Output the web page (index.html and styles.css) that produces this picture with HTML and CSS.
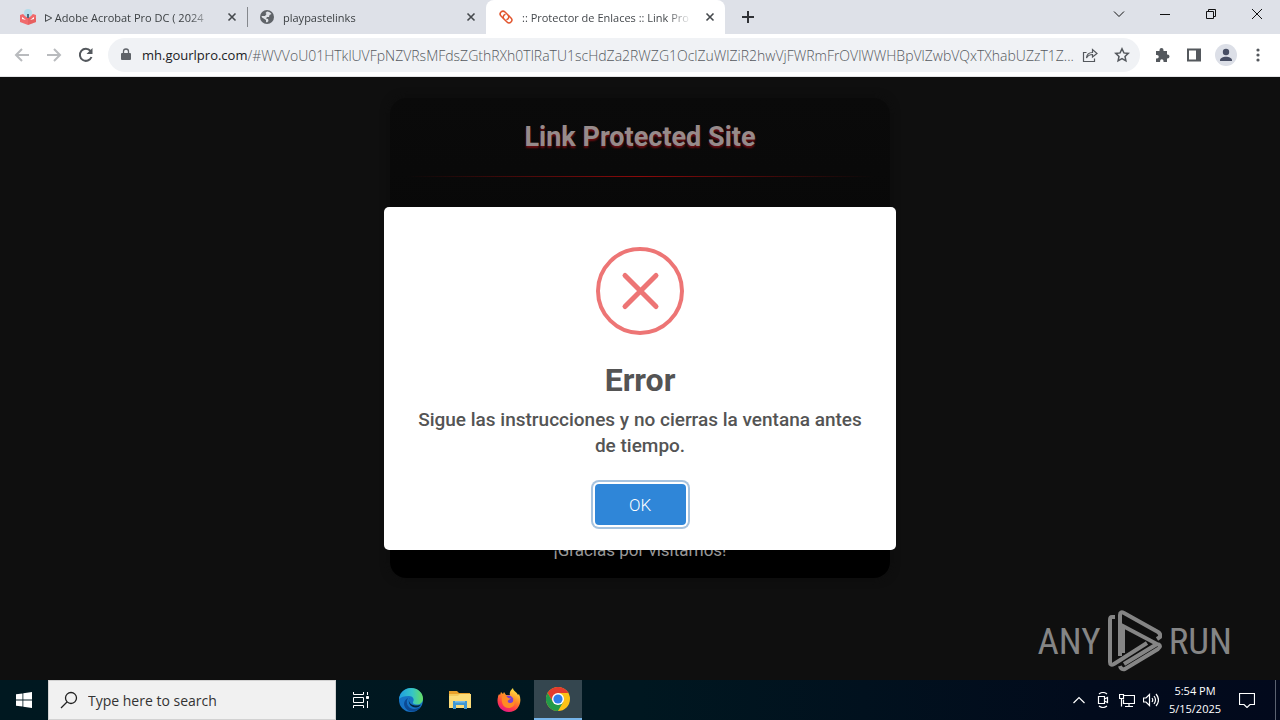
FILE: index.html
```html
<!DOCTYPE html>
<html lang="es">
	<head>
		<meta charset="utf-8">
		<title>:: Protector de Enlaces :: Link Protected Site</title>
		<link rel="stylesheet" href="styles.css">
	</head>
	<body>
		<header class="tabstrip">
			<div class="tab">
				<svg class="favicon" viewBox="0 0 16 16"><path fill="#f06a6c" d="M0 6l3-1 5 4 5-4 3 1v7l-8 3-8-3z"/><path fill="#d9534f" d="M8 9v7l8-3V9z" opacity=".4"/><circle cx="8" cy="4" r="4" fill="#b5ddea"/><path fill="#4b6b80" d="M7 5h2v4H7z"/><path fill="#fff" d="M2 8l4 3-4-1zm12 0l-4 3 4-1z"/></svg>
				<span class="tab_title">ᐅ Adobe Acrobat Pro DC ( 2024</span>
				<button class="tab_close" aria-label="Close tab"><svg viewBox="0 0 10 10"><path d="M1.500 1.500l7 7m0-7l-7 7"/></svg></button>
			</div>
			<div class="tab first_line">
				<svg class="favicon" viewBox="0 0 16 16"><circle cx="8" cy="8" r="7" fill="#5f6368"/><path fill="#dee1e6" d="M8 2.500c2 0 3.500 1 4.500 2.500l-2 1-.5 2H8L7 9.500l2 .5.5 2L8 13.500 7 13v-2L3 8.500 2.500 7H6l1.500-2-1-1z"/></svg>
				<span class="tab_title">playpastelinks</span>
				<button class="tab_close" aria-label="Close tab"><svg viewBox="0 0 10 10"><path d="M1.500 1.500l7 7m0-7l-7 7"/></svg></button>
			</div>
			<div class="tab active">
				<svg class="favicon" viewBox="0 0 16 16" fill="none" stroke="#e2562f" stroke-width="1.500" stroke-linecap="round"><path d="M5.500 9.500L3 7a2.800 2.800 0 0 1 4-4l3 3a2.800 2.800 0 0 1-1 4.500"/><path d="M10.500 6.500L13 9a2.800 2.800 0 0 1-4 4l-3-3a2.800 2.800 0 0 1 1-4.500"/></svg>
				<span class="tab_title">:: Protector de Enlaces :: Link Pro</span>
				<button class="tab_close" aria-label="Close tab"><svg viewBox="0 0 10 10"><path d="M1.500 1.500l7 7m0-7l-7 7"/></svg></button>
			</div>
			<button class="new_tab" aria-label="New tab"><svg viewBox="0 0 12 12"><path d="M6 0v12M0 6h12"/></svg></button>
			<div class="window_buttons">
				<button aria-label="Search tabs"><svg viewBox="0 0 10 10"><path d="M0 2.500l5 5 5-5"/></svg></button>
				<button aria-label="Minimize"><svg viewBox="0 0 10 10"><path d="M0 5.500h10"/></svg></button>
				<button aria-label="Restore"><svg viewBox="0 0 10 10"><path d="M.5 2.500h7v7h-7zM2.500 2.500v-2h7v7h-2"/></svg></button>
				<button aria-label="Close"><svg viewBox="0 0 10 10"><path d="M0 0l10 10M10 0L0 10"/></svg></button>
			</div>
		</header>

		<nav class="toolbar">
			<button class="tool off" aria-label="Back"><svg viewBox="0 0 16 16"><path d="M15 8H2M8 2L2 8l6 6"/></svg></button>
			<button class="tool off" aria-label="Forward"><svg viewBox="0 0 16 16"><path d="M1 8h13M8 2l6 6-6 6"/></svg></button>
			<button class="tool" aria-label="Reload"><svg viewBox="0 0 16 16"><path d="M13.500 10A6 6 0 1 1 12.500 4"/><path class="solid" d="M14.500 1v6h-6z"/></svg></button>
			<div class="omnibox">
				<svg class="lock" viewBox="0 0 10 14"><path fill="#5f6368" d="M1 5h8a1 1 0 0 1 1 1v5a1 1 0 0 1-1 1H1a1 1 0 0 1-1-1V6a1 1 0 0 1 1-1z"/><path fill="none" stroke="#5f6368" stroke-width="1.300" d="M2.500 5.500V3.500a2.500 2.500 0 0 1 5 0v2"/></svg>
				<label for="url">mh.gourlpro.com</label>
				<input id="url" type="text" value="/#WVVoU01HTklUVFpNZVRsMFdsZGthRXh0TlRaTU1scHdZa2RWZG1OclZuWlZiR2hwVjFWRmFrOVlWWHBpVlZwbVQxTXhabUZzT1Z...">
				<button class="tool" aria-label="Share"><svg viewBox="0 0 16 16" class="thin"><path d="M4.500 5.500H1.500v9h11v-3M4.500 11c.3-4 2.500-5.500 6-5.500v-3L15 6.500 10.500 10V7.500c-2.500 0-4.500.8-6 3.500z"/></svg></button>
				<button class="tool" aria-label="Bookmark"><svg viewBox="0 0 16 16" class="star"><path d="M8 1.800l1.900 4.100 4.400.5-3.300 3 .9 4.400L8 11.600l-3.900 2.200.9-4.400-3.300-3 4.400-.5z"/></svg></button>
			</div>
			<button class="tool" aria-label="Extensions"><svg viewBox="0 0 16 16"><path class="solid" d="M2 4h3.500V3a2 2 0 0 1 4 0v1H13v3.500h.5a2 2 0 0 1 0 4H13V15H9.500v-1a1.700 1.700 0 0 0-3.400 0v1H2v-3.500h1a1.700 1.700 0 0 0 0-3.500H2z"/></svg></button>
			<button class="tool" aria-label="Side panel"><svg viewBox="0 0 16 16"><path d="M2 2.500h12v11H2z"/><path class="solid" d="M10 2h4v12h-4z"/></svg></button>
			<button class="tool" aria-label="Profile"><svg class="avatar" viewBox="0 0 22 22"><circle cx="11" cy="11" r="11" fill="#dcdfe7"/><circle cx="11" cy="8" r="3.200" fill="#474d63"/><path fill="#474d63" d="M5 16.500c0-5 12-5 12 0v.5H5z"/></svg></button>
			<button class="tool" aria-label="Menu"><svg viewBox="0 0 16 16"><g class="solid"><circle cx="8" cy="3" r="1.600"/><circle cx="8" cy="8" r="1.600"/><circle cx="8" cy="13" r="1.600"/></g></svg></button>
		</nav>

		<main class="page">
			<section class="card">
				<h1>Link Protected Site</h1>
				<hr>
				<p class="thanks">¡Gracias por visitarnos!</p>
			</section>

			<div class="backdrop">
				<div class="popup" role="dialog" aria-labelledby="popup_title">
					<svg class="popup_icon" viewBox="0 0 88 88"><circle cx="44" cy="44" r="42"/><path class="cross" d="M29 28.500l31 31m0-31l-31 31"/></svg>
					<h2 id="popup_title">Error</h2>
					<p>Sigue las instrucciones y no cierras la ventana antes de tiempo.</p>
					<button class="confirm">OK</button>
				</div>
			</div>

			<div class="watermark">
				<span>ANY</span>
				<svg viewBox="0 0 54 62"><path d="M7 7H4Q2 7 2 10v42q0 4 4 2l33-21M15 43V16l34 18-33 20M12 46V5q0-4 4-2l34 19q3 2 2 5l-3 2M12 56q1 4 5 3l33-20q4-3 0-5"/></svg>
				<span>RUN</span>
			</div>
		</main>

		<footer class="taskbar">
			<button class="app" aria-label="Start"><svg width="16" height="16" viewBox="0 0 16 16"><path fill="#fff" d="M0 2.300l6.500-.9v6.200H0zM7.300 1.300L16 0v7.600H7.300zM0 8.400h6.500v6.200L0 13.700zM7.300 8.400H16V16l-8.700-1.300z"/></svg></button>
			<div class="search">
				<svg width="18" height="18" viewBox="0 0 18 18"><circle cx="11" cy="7" r="5.500"/><path d="M7 11l-6 6"/></svg>
				<input type="text" aria-label="Search" placeholder="Type here to search">
			</div>
			<button class="app task_view" aria-label="Task view"><svg width="16" height="16" viewBox="0 0 16 16" fill="none" stroke="#fff"><path d="M.5 0v2.500h10V0M.5 5.500h10v5H.5zM.5 16v-2.500h10V16M14.500 0v3M14.500 9v7"/><path fill="#fff" d="M13.500 4.500h2v2h-2z"/></svg></button>
			<button class="app" aria-label="Edge"><svg width="24" height="24" viewBox="0 0 24 24"><defs><linearGradient id="edge" x1="0" x2="1"><stop offset="0" stop-color="#1e9de0"/><stop offset=".55" stop-color="#35c5c7"/><stop offset="1" stop-color="#66de62"/></linearGradient></defs><circle cx="12" cy="12" r="12" fill="#1673c5"/><path fill="url(#edge)" d="M0 11C1 4 6 0 12 0c7 0 12 5 12 10.500 0 4-3 6-6 6-3.500 0-4.500-1.500-4-2.500 2-3-.5-6-4-6-5 0-8 1-10 3z"/><path fill="#0c4a94" d="M9 10c-3 5 0 11 6 11 3 0 5-1 6.500-2.500C18 26 6 25 5 16c0-3 2-5 4-6z"/><path fill="#04253b" d="M11 10c-2 2-1 6 3 7 3 1 6 .6 8-.5-1 2-3 3-5 3-6 0-9-6-6-9.500z"/></svg></button>
			<button class="app" aria-label="File Explorer"><svg width="22" height="20" viewBox="0 0 22 20"><path fill="#e8a02a" d="M0 1h8l2 2h11v5H0z"/><path fill="#fbdb78" d="M0 4h22v14H0z"/><path fill="#f3c95b" d="M0 4h11L9 6H0z"/><path fill="#3f97d3" d="M4 11h14v8h-3v-4H7v4H4z"/><path fill="#7bbce6" d="M6 11h10v1.500H6z"/></svg></button>
			<button class="app" aria-label="Firefox"><svg width="24" height="24" viewBox="0 0 24 24"><defs><linearGradient id="fox" x1=".8" y1="0" x2=".3" y2="1"><stop offset="0" stop-color="#fff04a"/><stop offset=".45" stop-color="#ff8a26"/><stop offset=".75" stop-color="#ff3b4a"/><stop offset="1" stop-color="#e3158a"/></linearGradient></defs><path fill="url(#fox)" d="M4 4l2 2 1-2 2 3 4 0c-1-3 1-5 3-7 0 3 4 4 5 7l1-1c4 8-1 18-10 18S-1 16 1 9c0-2 1-2 1-3l1 1z"/><circle cx="11.500" cy="12.500" r="5" fill="#7a3fd3"/><path fill="#ff8b24" d="M5 8c3-1 5 0 6 2l3 .5-3 2c-1 1 1 3 3 2.500 2-.5 3-2 2-5 4 4 1 10-4.500 10S4 15 5 8z"/></svg></button>
			<button class="app current" aria-label="Chrome"><svg width="24" height="24" viewBox="0 0 24 24"><circle cx="12" cy="12" r="12" fill="#fbc116"/><path fill="#e33b2e" d="M1.600 6A12 12 0 0 1 22.400 6H12L7 15z"/><path fill="#229a49" d="M1.600 6A12 12 0 0 0 12 24l5.200-9L12 17l-5-2z"/><circle cx="12" cy="12" r="6" fill="#fff"/><circle cx="12" cy="12" r="4.600" fill="#2f7de9"/></svg></button>
			<div class="tray">
				<button aria-label="Show hidden icons"><svg viewBox="0 0 16 16"><path d="M2.500 11L8 5.500l5.500 5.500"/></svg></button>
				<button aria-label="Meet now"><svg viewBox="0 0 16 16"><path d="M3.500 4.500h6v7h-6zM9.500 7l3-1.500v5l-3-1.500M4 2q4-3 8 0M4 14q4 3 8 0"/></svg></button>
				<button aria-label="Network"><svg viewBox="0 0 16 16"><path d="M5 3.500h10.500v8H4.500v-4M10 11.500v3M6 14.500h8M.5 2.500h4v4h-4zM2.500 6.500v8"/></svg></button>
				<button aria-label="Volume"><svg viewBox="0 0 16 16"><path d="M.5 6v4H3l3.500 3.500v-11L3 6zM9 6q1.500 2 0 4M11 4q3 4 0 8M13 2q5 6 0 12"/></svg></button>
			</div>
			<div class="clock"><span>5:54 PM</span><span>5/15/2025</span></div>
			<button class="notes" aria-label="Notifications"><svg width="16" height="16" viewBox="0 0 16 16"><path d="M.5 1.500h15v11H11L8 15.500l-3-3H.5z"/></svg></button>
			<button class="desktop" aria-label="Show desktop"></button>
		</footer>
	</body>
</html>
```
FILE: styles.css
```css
* { box-sizing: border-box; }
body {
	margin: 0;
	min-height: 100vh;
	display: flex;
	flex-direction: column;
	font-family: "Open Sans", "Noto Sans", sans-serif;
	font-size: 11px;
	background: #0f0f0f;
}
button {
	display: flex;
	align-items: center;
	justify-content: center;
	padding: 0;
	border: 0;
	background: none;
	font-family: inherit;
}
input {
	min-width: 0;
	padding: 0;
	border: 0;
	outline: 0;
	background: none;
	font-family: inherit;
}

/* tabs */
.tabstrip {
	display: flex;
	height: 34px;
	padding-left: 8px;
	background: #dee1e8;
}
.tab {
	display: flex;
	align-items: center;
	width: 239px;
	padding: 0 7px 0 12px;
	color: #3c4043;
}
.first_line {
	background: linear-gradient(#85888d, #85888d) 0 7px / 1px 20px no-repeat;
}
.active {
	background: #fff;
	border-radius: 8px 8px 0 0;
	color: #45494d;
}
.favicon {
	width: 16px;
	height: 16px;
	margin-right: 8px;
}
.tab_title {
	flex: 1;
	overflow: hidden;
	white-space: nowrap;
	margin-right: 10px;
	-webkit-mask-image: linear-gradient(to right, #000 85%, transparent);
	mask-image: linear-gradient(to right, #000 85%, transparent);
}
.tab_close {
	width: 16px;
}
.tab_close svg {
	width: 10px;
	stroke: #45494d;
	stroke-width: 1.6;
}
.new_tab {
	width: 46px;
}
.new_tab svg {
	width: 12px;
	stroke: #303236;
	stroke-width: 2;
}
.window_buttons {
	display: flex;
	margin-left: auto;
}
.window_buttons button {
	width: 46px;
	height: 28px;
}
.window_buttons svg {
	width: 10px;
	fill: none;
	stroke: #111;
	overflow: visible;
}

/* address bar */
.toolbar {
	display: flex;
	align-items: center;
	padding: 4px 6px;
	background: #fff;
	border-bottom: 1px solid #e4e5e7;
}
.tool {
	flex: none;
	width: 32px;
	height: 32px;
}
.tool svg {
	width: 16px;
	height: 16px;
	fill: none;
	stroke: #54585d;
	stroke-width: 2;
}
.tool .solid {
	fill: #54585d;
	stroke: none;
}
.tool.off svg { stroke: #b9bbbe; }
.tool .thin { stroke-width: 1.2; }
.tool .star { stroke-width: 1.5; }
.tool .avatar {
	width: 22px;
	height: 22px;
	stroke: none;
}
.omnibox {
	flex: 1;
	display: flex;
	align-items: center;
	min-width: 0;
	height: 34px;
	margin: 0 6px;
	padding: 0 2px 0 13px;
	border-radius: 17px;
	background: #f0f2f5;
	font-size: 13px;
	color: #202124;
}
.lock {
	width: 10px;
	height: 14px;
	margin-right: 11px;
}
.omnibox input {
	flex: 1;
	font-size: 14px;
	font-weight: 300;
	color: #55595e;
	text-overflow: ellipsis;
}

/* protected page */
.page {
	position: relative;
	flex: 1;
	padding: 21px 0;
	font-family: Roboto, sans-serif;
}
.card {
	display: flex;
	flex-direction: column;
	max-width: 500px;
	min-height: 480px;
	margin: 0 auto;
	padding: 22px 16px 18px;
	border-radius: 16px;
	background: linear-gradient(#0a0a0a, #080808 30%, #000 90%);
	box-shadow: 0 0 10px #0d0d0d;
	text-align: center;
}
.card h1 {
	margin: 0;
	font-size: 27px;
	line-height: 34px;
	color: #968b8b;
	text-shadow: 0 2px 2px #6d0c10;
}
.card hr {
	width: 100%;
	height: 1px;
	margin: 22px 0;
	border: 0;
	background: linear-gradient(to right, transparent, #8c0a0a, transparent);
}
.thanks {
	margin: auto 0 0;
	font-size: 17px;
	line-height: 20px;
	color: #999;
}
.backdrop {
	position: absolute;
	inset: 0;
	display: flex;
	align-items: center;
	justify-content: center;
}
.popup {
	display: flex;
	flex-direction: column;
	align-items: center;
	width: 512px;
	padding: 40px 30px 25px;
	border-radius: 5px;
	background: #fff;
	color: #545454;
	text-align: center;
}
.popup_icon {
	width: 88px;
	fill: none;
	stroke: #ed7575;
	stroke-width: 4;
}
.cross {
	stroke-width: 5;
	stroke-linecap: round;
}
.popup h2 {
	margin: 25px 0 7px;
	font-size: 32px;
	line-height: 40px;
}
.popup p {
	margin: 0 0 25px;
	font-size: 19px;
	line-height: 26px;
	font-weight: 500;
}
.confirm {
	width: 91px;
	height: 41px;
	border-radius: 4px;
	background: #2f86d8;
	box-shadow: 0 0 0 2px #fff, 0 0 0 4px #a6c3df;
	color: #fff;
	font-size: 17px;
	font-weight: 300;
}
.watermark {
	position: absolute;
	right: 48px;
	bottom: 8px;
	display: flex;
	align-items: center;
	gap: 7px;
	font-family: "Liberation Sans Narrow", "Roboto Condensed", Roboto, sans-serif;
	font-size: 37px;
	color: #858585;
}
.watermark svg {
	width: 54px;
	height: 62px;
	fill: none;
	stroke: #858585;
	stroke-width: 4;
}

/* windows taskbar */
.taskbar {
	display: flex;
	height: 40px;
	background: linear-gradient(to right, #001820, #001720 50%, #020b1c 85%, #02091c);
	color: #fff;
}
.app {
	width: 48px;
	margin-right: 1px;
}
.app:first-child { margin: 0; }
.task_view { width: 50px; }
.current {
	background: #34464f;
	border-bottom: 2px solid #76b5ea;
}
.search {
	display: flex;
	align-items: center;
	gap: 10px;
	width: 288px;
	padding: 0 11px;
	background: #f1f1f1;
	border: 1px solid #d2d2d2;
}
.search svg {
	fill: none;
	stroke: #222;
	stroke-width: 1.3;
}
.search input {
	flex: 1;
	font-size: 14px;
}
.search input::placeholder { color: #333; }
.tray {
	display: flex;
	margin-left: auto;
}
.tray button { width: 24px; }
.tray svg { width: 16px; }
.tray svg,
.notes svg {
	fill: none;
	stroke: #fff;
	stroke-width: 1.2;
}
.clock {
	display: flex;
	flex-direction: column;
	justify-content: center;
	width: 64px;
	line-height: 18px;
	text-align: center;
}
.notes { width: 40px; }
.desktop {
	width: 5px;
	margin-left: 8px;
	border-left: 1px solid #5b6270;
}
```
